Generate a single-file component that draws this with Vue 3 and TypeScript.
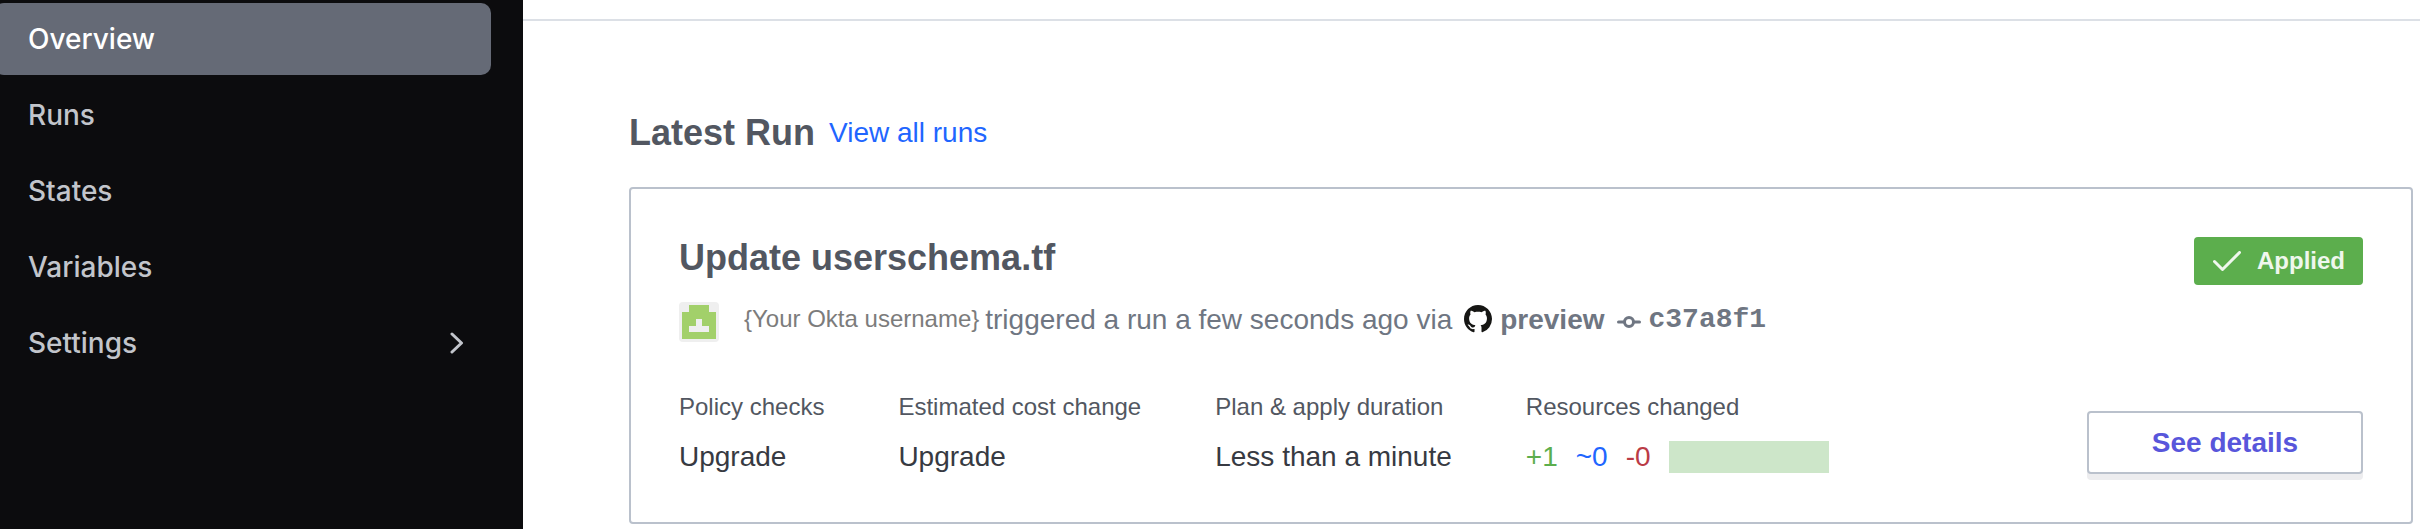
<script setup lang="ts">
interface NavItem {
  label: string
  active?: boolean
  expandable?: boolean
}

interface Change {
  kind: 'add' | 'update' | 'remove'
  text: string
}

const navItems: NavItem[] = [
  { label: 'Overview', active: true },
  { label: 'Runs' },
  { label: 'States' },
  { label: 'Variables' },
  { label: 'Settings', expandable: true },
]

const stats: { label: string; value: string }[] = [
  { label: 'Policy checks', value: 'Upgrade' },
  { label: 'Estimated cost change', value: 'Upgrade' },
  { label: 'Plan & apply duration', value: 'Less than a minute' },
]

const changes: Change[] = [
  { kind: 'add', text: '+1' },
  { kind: 'update', text: '~0' },
  { kind: 'remove', text: '-0' },
]
</script>

<template>
  <div class="layout">
    <nav class="sidebar" aria-label="Workspace">
      <ul class="nav-list">
        <li v-for="item in navItems" :key="item.label">
          <a
            href="#"
            class="nav-link"
            :class="{ active: item.active }"
            :aria-current="item.active ? 'page' : undefined"
          >
            <span>{{ item.label }}</span>
            <svg v-if="item.expandable" class="chevron" viewBox="0 0 14 22" aria-hidden="true">
              <path d="M2 2l9.500 9L2 20" />
            </svg>
          </a>
        </li>
      </ul>
    </nav>

    <main class="main">
      <div class="topline"></div>
      <section class="content">
        <header class="section-head">
          <h2 class="heading">Latest Run</h2>
          <a href="#" class="all-runs">View all runs</a>
        </header>

        <article class="card">
          <div class="card-head">
            <h3 class="heading run-title">Update userschema.tf</h3>
            <span class="badge">
              <svg class="check" viewBox="0 0 28 20" aria-hidden="true">
                <path d="M1.500 10.500l8 8L26.500 1.500" />
              </svg>
              <span>Applied</span>
            </span>
          </div>

          <div class="meta">
            <svg class="avatar" viewBox="0 0 40 40" aria-hidden="true">
              <rect width="40" height="40" rx="4" fill="#efefef" />
              <path
                fill="#a2d06a"
                d="M10 3h20v7h7v27H3V10h7zM17 17v7h-7v6h20v-6h-7v-7z"
                fill-rule="evenodd"
              />
            </svg>
            <span class="user">{Your Okta username}</span>
            <span class="trigger">triggered a run a few seconds ago via</span>
            <svg class="github" viewBox="0 0 16 16" aria-hidden="true">
              <path
                d="M8 0C3.580 0 0 3.580 0 8c0 3.540 2.290 6.530 5.470 7.590.4.070.55-.17.55-.38 0-.19-.01-.82-.01-1.490-2.010.37-2.530-.49-2.690-.94-.09-.23-.48-.94-.82-1.130-.28-.15-.68-.52-.01-.53.63-.01 1.080.58 1.230.82.72 1.210 1.870.87 2.330.66.07-.52.28-.87.51-1.070-1.780-.2-3.640-.89-3.640-3.950 0-.87.31-1.590.82-2.150-.08-.2-.36-1.020.08-2.120 0 0 .67-.21 2.200.82.64-.18 1.320-.27 2-.27s1.360.09 2 .27c1.530-1.040 2.200-.82 2.200-.82.44 1.100.16 1.920.08 2.120.51.56.82 1.270.82 2.150 0 3.070-1.870 3.750-3.650 3.950.29.25.54.73.54 1.480 0 1.070-.01 1.930-.01 2.200 0 .21.15.46.55.38A8.010 8.010 0 0 0 16 8c0-4.420-3.580-8-8-8z"
              />
            </svg>
            <a href="#" class="branch">preview</a>
            <svg class="commit" viewBox="0 0 24 34" aria-hidden="true">
              <circle cx="12" cy="20" r="4.500" />
              <path d="M1.500 20H7M17 20h5.500" />
            </svg>
            <a href="#" class="hash">c37a8f1</a>
          </div>

          <div class="card-foot">
            <dl class="stats">
              <div v-for="stat in stats" :key="stat.label" class="stat">
                <dt>{{ stat.label }}</dt>
                <dd>{{ stat.value }}</dd>
              </div>
              <div class="stat">
                <dt>Resources changed</dt>
                <dd class="changes">
                  <span v-for="change in changes" :key="change.kind" :class="change.kind">{{
                    change.text
                  }}</span>
                  <span class="bar"></span>
                </dd>
              </div>
            </dl>
            <button type="button" class="details">See details</button>
          </div>
        </article>
      </section>
    </main>
  </div>
</template>

<style>
body {
  margin: 0;
  background: #fff;
}
</style>

<style scoped>
.layout {
  display: flex;
  min-height: 100vh;
  font-family: 'Liberation Sans', Arial, sans-serif;
  font-size: 28px;
  line-height: 34px;
}

a {
  text-decoration: none;
}

.sidebar {
  flex: none;
  box-sizing: border-box;
  width: 523px;
  padding: 3px 32px 0 0;
  overflow: hidden;
  background: #0c0c0e;
  font-family: Inter, sans-serif;
  font-weight: 500;
}

.nav-list {
  display: grid;
  gap: 4px;
  margin: 0 0 0 -6px;
  padding: 0;
  list-style: none;
}

.nav-link {
  display: flex;
  align-items: center;
  justify-content: space-between;
  height: 72px;
  padding: 0 27px 0 34px;
  border-radius: 10px;
  color: #c2c5cb;
}

.nav-link.active {
  background: #656a76;
  color: #fff;
}

.chevron {
  width: 14px;
  height: 22px;
  fill: none;
  stroke: #c2c5cb;
  stroke-width: 3;
  stroke-linecap: round;
  stroke-linejoin: round;
}

.main {
  flex: 1;
  min-width: 0;
}

.topline {
  height: 19px;
  border-bottom: 2px solid #dce0e6;
}

.content {
  padding: 90px 7px 0 106px;
}

.section-head {
  display: flex;
  align-items: center;
  gap: 14px;
  margin-bottom: 32px;
}

.heading {
  margin: 0;
  color: #525761;
  font-size: 36px;
  font-weight: 700;
  line-height: 44px;
}

.all-runs {
  color: #1f66ff;
}

.card {
  padding: 48px;
  border: 2px solid #bac1cc;
  border-radius: 4px;
}

.card-head {
  display: flex;
  align-items: flex-start;
  justify-content: space-between;
  margin-bottom: 17px;
}

.run-title {
  line-height: 42px;
}

.badge {
  display: flex;
  align-items: center;
  gap: 16px;
  height: 48px;
  padding: 0 18px 0 19px;
  border-radius: 4px;
  background: #5cae4d;
  color: #eff7ed;
  font-size: 24px;
  font-weight: 700;
}

.check {
  width: 28px;
  height: 20px;
  fill: none;
  stroke: #eff7ed;
  stroke-width: 3;
  stroke-linecap: round;
  stroke-linejoin: round;
}

.meta {
  display: flex;
  align-items: flex-start;
  margin-bottom: 48px;
  color: #6f7682;
  line-height: 36px;
}

.avatar {
  width: 40px;
  height: 40px;
  margin-right: 25px;
}

.user {
  margin-right: 6px;
  color: #7c7c7c;
  font-size: 24px;
  line-height: 34px;
}

.github {
  width: 28px;
  height: 34px;
  margin: 0 8px 0 12px;
  fill: #161614;
}

.branch,
.hash {
  color: #6f7682;
  font-weight: 700;
}

.commit {
  width: 24px;
  height: 34px;
  margin: 0 8px 0 12px;
  fill: none;
  stroke: #6f7682;
  stroke-width: 3;
  stroke-linecap: round;
}

.hash {
  font-family: 'Liberation Mono', 'Courier New', monospace;
}

.card-foot {
  display: flex;
  align-items: flex-end;
  justify-content: space-between;
}

.stats {
  display: flex;
  gap: 74px;
  margin: 0;
}

.stat {
  display: grid;
  gap: 16px;
}

dt {
  color: #525761;
  font-size: 24px;
}

dd {
  margin: 0;
  color: #373a42;
}

.changes {
  display: flex;
  align-items: center;
  gap: 18px;
}

.add {
  color: #5cae4d;
}

.update {
  color: #1f66ff;
}

.remove {
  color: #ba3b46;
}

.bar {
  width: 160px;
  height: 32px;
  background: #cde6c9;
}

.details {
  width: 276px;
  height: 63px;
  padding: 0;
  border: 2px solid #bac1cc;
  border-radius: 4px;
  background: #fff;
  box-shadow: 0 6px 0 #ededef;
  color: #5856db;
  font: inherit;
  font-weight: 700;
}
</style>
